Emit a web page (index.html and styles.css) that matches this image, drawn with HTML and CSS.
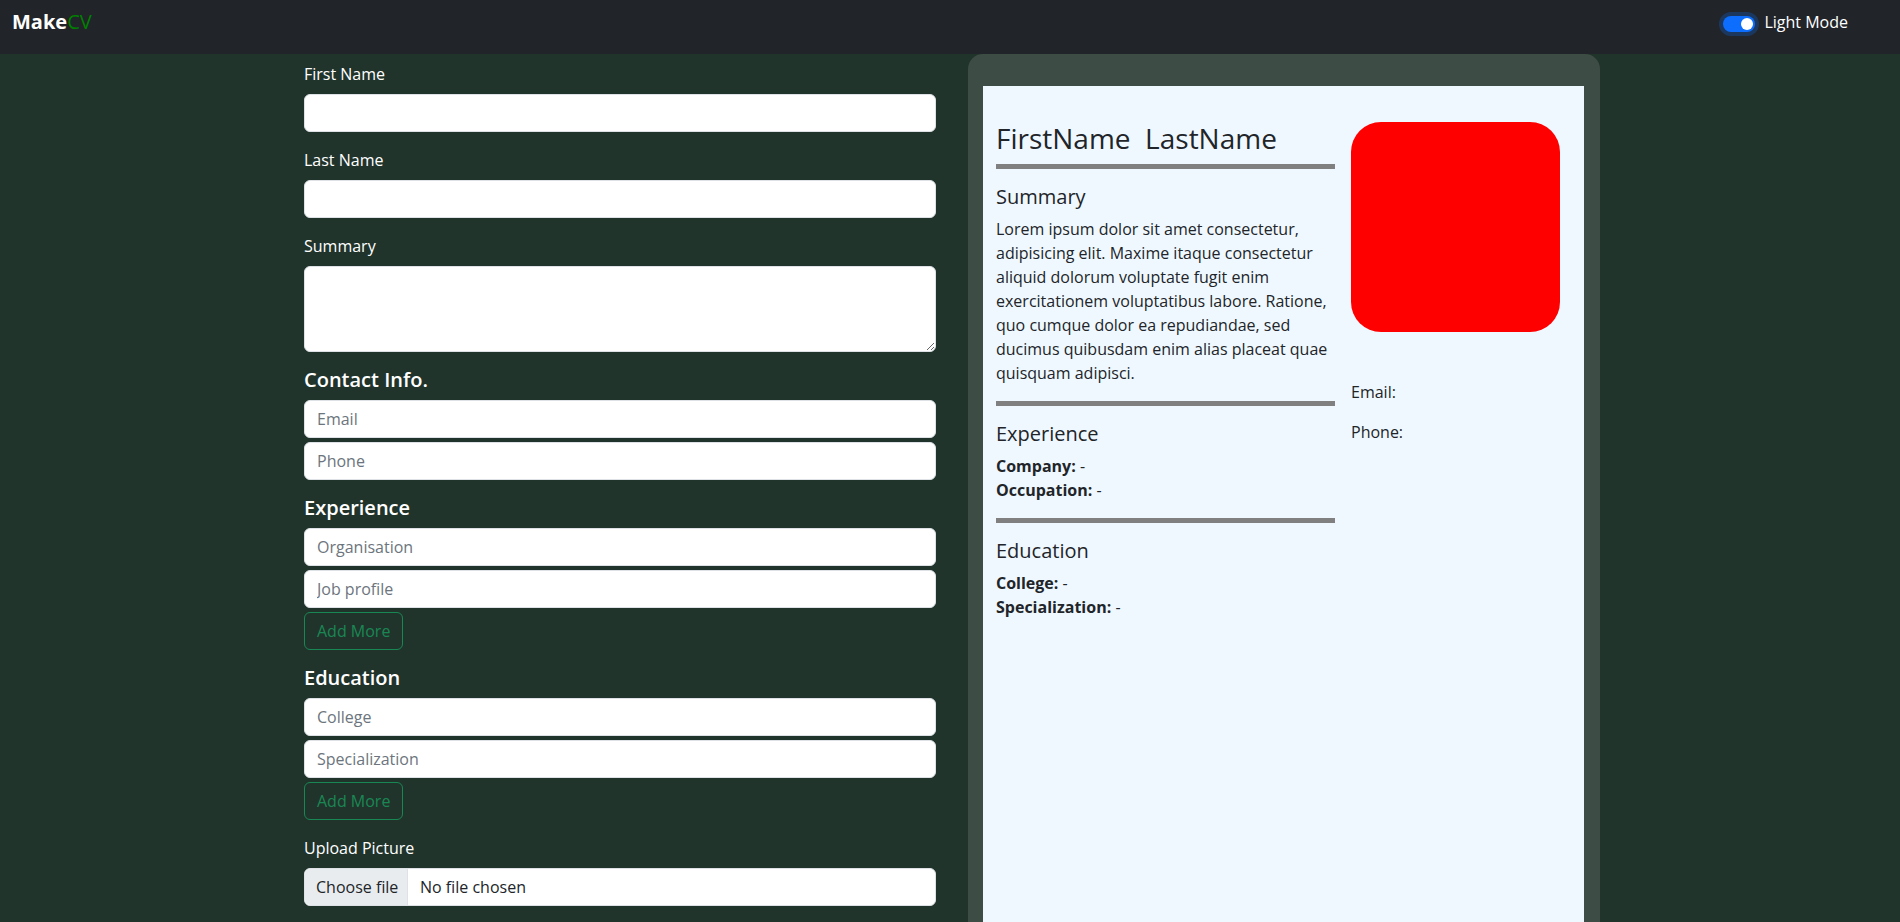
FILE: index.html
```html
<!DOCTYPE html>
<html lang="en">
<head>
<meta charset="utf-8">
<title>MakeCV</title>
<link rel="stylesheet" href="styles.css">
</head>
<body>
<nav class="navbar">
  <a class="brand" href="#"><span class="brand-make">Make</span><span class="brand-cv">CV</span></a>
  <div class="mode">
    <span class="switch"><span class="knob"></span></span>
    <span class="mode-label">Light Mode</span>
  </div>
</nav>
<main class="page">
  <form class="editor">
    <div class="field">
      <label class="lbl">First Name</label>
      <input class="ctl" type="text">
    </div>
    <div class="field">
      <label class="lbl">Last Name</label>
      <input class="ctl" type="text">
    </div>
    <div class="field">
      <label class="lbl">Summary</label>
      <textarea class="ctl area"></textarea>
    </div>
    <div class="section">
      <h5 class="sec-title">Contact Info.</h5>
      <input class="ctl stack" type="text" placeholder="Email">
      <input class="ctl" type="text" placeholder="Phone">
    </div>
    <div class="section">
      <h5 class="sec-title">Experience</h5>
      <input class="ctl stack" type="text" placeholder="Organisation">
      <input class="ctl stack" type="text" placeholder="Job profile">
      <button class="btn-add" type="button">Add More</button>
    </div>
    <div class="section">
      <h5 class="sec-title">Education</h5>
      <input class="ctl stack" type="text" placeholder="College">
      <input class="ctl stack" type="text" placeholder="Specialization">
      <button class="btn-add" type="button">Add More</button>
    </div>
    <div class="field">
      <label class="lbl">Upload Picture</label>
      <div class="file">
        <span class="file-btn">Choose file</span>
        <span class="file-name">No file chosen</span>
      </div>
    </div>
  </form>
  <section class="preview">
    <div class="paper">
      <div class="cv-main">
        <h2 class="cv-name">FirstName&nbsp; LastName</h2>
        <hr class="rule rule-top">
        <h5 class="cv-title">Summary</h5>
        <p class="cv-text">Lorem ipsum dolor sit amet consectetur, adipisicing elit. Maxime itaque consectetur aliquid dolorum voluptate fugit enim exercitationem voluptatibus labore. Ratione, quo cumque dolor ea repudiandae, sed ducimus quibusdam enim alias placeat quae quisquam adipisci.</p>
        <hr class="rule">
        <h5 class="cv-title">Experience</h5>
        <div class="cv-item"><b>Company:</b> -</div>
        <div class="cv-item"><b>Occupation:</b> -</div>
        <hr class="rule rule-gap">
        <h5 class="cv-title">Education</h5>
        <div class="cv-item"><b>College:</b> -</div>
        <div class="cv-item"><b>Specialization:</b> -</div>
      </div>
      <aside class="cv-side">
        <div class="photo"></div>
        <p class="cv-contact">Email:</p>
        <p class="cv-contact">Phone:</p>
      </aside>
    </div>
  </section>
</main>
</body>
</html>
```

FILE: styles.css
```css
* {
  box-sizing: border-box;
}

html,
body {
  margin: 0;
  height: 100%;
  overflow: hidden;
}

body {
  background: #21342c;
  font-family: "Open Sans", "Noto Sans", sans-serif;
  font-size: 16px;
  line-height: 1.5;
  color: #212529;
}

/* ---------- navbar ---------- */
.navbar {
  height: 54px;
  background: #212529;
  display: flex;
  align-items: flex-start;
  padding: 0 12px;
}

.brand {
  margin-top: 8px;
  font-size: 20px;
  line-height: 27px;
  color: #fff;
  text-decoration: none;
}

.brand-make {
  font-weight: 700;
}

.brand-cv {
  color: #008000;
}

.mode {
  margin-left: auto;
  margin-right: 40px;
  margin-top: 10px;
  display: flex;
  align-items: flex-start;
  gap: 9px;
  color: #fff;
  line-height: 24px;
}

.switch {
  width: 32px;
  height: 16px;
  margin-top: 6px;
  border-radius: 8px;
  background: #0d6efd;
  box-shadow: 0 0 0 4px rgba(13, 110, 253, 0.25);
  display: flex;
  justify-content: flex-end;
  align-items: center;
  padding: 2px;
}

.knob {
  width: 12px;
  height: 12px;
  border-radius: 50%;
  background: #fff;
}

/* ---------- layout ---------- */
.page {
  display: flex;
  justify-content: center;
  gap: 32px;
  padding-left: 4px;
  height: calc(100% - 54px);
}

.editor {
  width: 632px;
  padding-top: 8px;
}

/* ---------- form ---------- */
.field,
.section {
  margin-bottom: 16px;
}

.lbl {
  display: block;
  color: #fff;
  line-height: 24px;
  margin-bottom: 8px;
}

.sec-title {
  margin: 0 0 8px;
  color: #fff;
  font-size: 20px;
  font-weight: 600;
  line-height: 24px;
}

.ctl {
  display: block;
  width: 100%;
  height: 38px;
  padding: 6px 12px;
  font: inherit;
  line-height: 24px;
  color: #212529;
  background: #fff;
  border: 1px solid #dee2e6;
  border-radius: 6px;
  margin: 0;
}

.ctl::placeholder {
  color: #6c757d;
}

.area {
  height: 86px;
  resize: vertical;
}

.stack {
  margin-bottom: 4px;
}

.btn-add {
  display: block;
  height: 38px;
  padding: 6px 12px;
  font: inherit;
  line-height: 24px;
  color: #198754;
  background: transparent;
  border: 1px solid #198754;
  border-radius: 6px;
}

.file {
  display: flex;
  height: 38px;
  background: #fff;
  border: 1px solid #dee2e6;
  border-radius: 6px;
  overflow: hidden;
}

.file-btn {
  width: 103px;
  flex: none;
  padding: 6px 12px 6px 11px;
  line-height: 24px;
  background: #e9ecef;
  border-right: 1px solid #dee2e6;
  color: #212529;
  white-space: nowrap;
}

.file-name {
  padding: 6px 12px;
  line-height: 24px;
  color: #212529;
}

/* ---------- preview ---------- */
.preview {
  width: 632px;
  background: #3d4c45;
  border-radius: 15px 15px 0 0;
  padding: 32px 16px 0 15px;
  display: flex;
}

.paper {
  flex: 1;
  background: #f0f8ff;
  padding: 36px 24px 0 13px;
  display: grid;
  grid-template-columns: 339px 1fr;
  column-gap: 16px;
  align-content: start;
}

.cv-name {
  margin: 0 0 8px;
  font-size: 28px;
  font-weight: 500;
  line-height: 1.2;
  white-space: pre;
}

.rule {
  height: 5px;
  margin: 16px 0;
  border: 0;
  background: #808080;
}

.rule-top {
  margin-top: 0;
}

.rule-gap {
  margin-top: 16px;
}

.cv-title {
  margin: 0 0 8px;
  font-size: 20px;
  font-weight: 500;
  line-height: 24px;
}

.cv-text {
  margin: 0;
}

.cv-item {
  line-height: 24px;
}

.cv-item b {
  font-weight: 700;
}

.photo {
  width: 100%;
  height: 210px;
  background: #ff0000;
  border-radius: 30px;
  margin-bottom: 48px;
}

.cv-contact {
  margin: 0 0 16px;
}
```
